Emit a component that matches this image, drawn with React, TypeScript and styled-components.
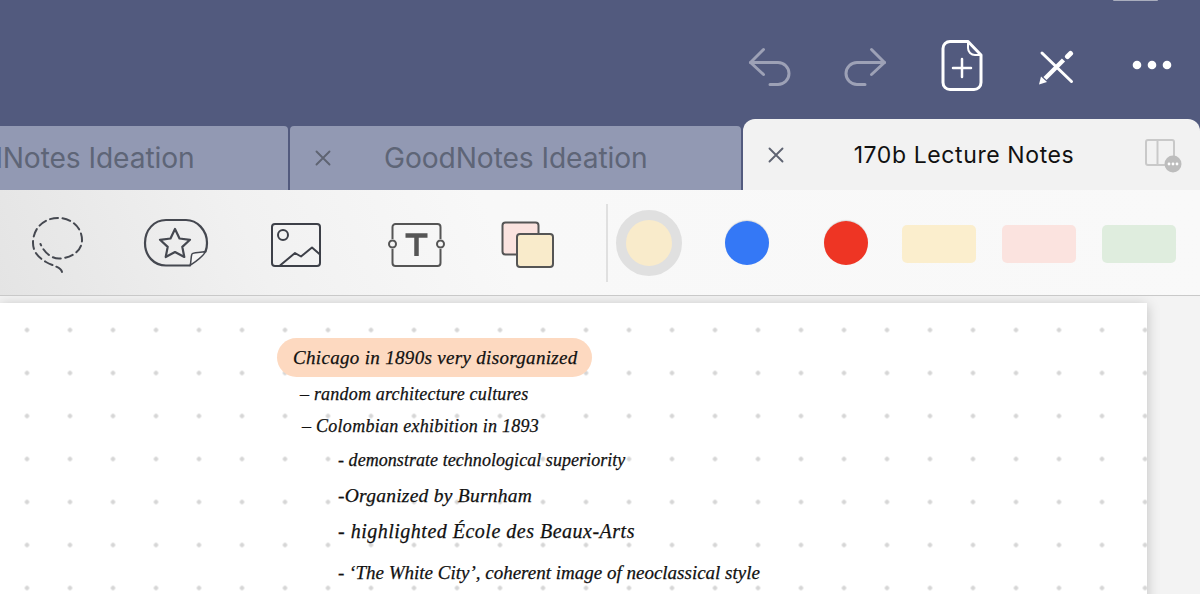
import React from "react";
import styled, { createGlobalStyle } from "styled-components";

const Global = createGlobalStyle`
  html, body { margin: 0; padding: 0; height: 100%; overflow: hidden; background: #f3f3f3; }
  #root { height: 100%; }
`;

const Shell = styled.div`
  width: 1200px; height: 594px; display: flex; flex-direction: column; overflow: hidden;
  font-family: Inter, "Liberation Sans", sans-serif;
`;
const TopBar = styled.header`
  height: 126px; flex: none; background: #525a7e; display: flex; flex-direction: column;
`;
const Handle = styled.div`
  width: 45px; height: 1px; align-self: flex-end; margin-right: 42px; background: #a9adbd; border-radius: 0 0 2px 2px;
`;
const Actions = styled.div`
  display: flex; align-items: flex-start; padding-left: 748px; padding-top: 39px;
`;
const ActionSlot = styled.span<{ $w: number; $top: number }>`
  display: block; flex: none; width: ${(p) => p.$w}px; padding-top: ${(p) => p.$top}px; line-height: 0;
`;
const TabBar = styled.nav`
  height: 64px; flex: none; background: #525a7e; display: flex; gap: 2px;
`;
const Tab = styled.div<{ $shift?: number }>`
  flex: none; width: 451px; height: 64px; margin-left: ${(p) => p.$shift ?? 0}px; background: #9299b3;
  border-radius: 4px 4px 0 0; display: flex; align-items: center; padding-left: 25px; box-sizing: border-box;
  color: #5e6577; font-size: 28.2px; letter-spacing: -0.1px;
`;
const TabLabel = styled.span`
  margin-left: 53px; margin-top: -1px; white-space: nowrap;
`;
const ActiveTab = styled.div`
  flex: 1; margin-top: -7px; height: 71px; background: #f2f2f2; border-radius: 12px 12px 0 0;
  display: flex; align-items: center; padding: 0 18px 0 25px; color: #111; font-size: 23px; letter-spacing: 0.6px;
`;
const ActiveLabel = styled.span`
  flex: 1; text-align: center; white-space: nowrap; padding-left: 2px;
`;
const Toolbar = styled.div`
  height: 106px; flex: none; box-sizing: border-box; border-bottom: 1.5px solid #c9c9c9; display: flex; align-items: center;
  background: linear-gradient(68deg, #e4e4e4 0%, #f1f1f1 22%, #f8f8f8 42%, #f9f9f9 100%);
  padding-top: 1px;
`;
const Tool = styled.div<{ $w: number; $ml?: number; $dy?: number }>`
  flex: none; width: ${(p) => p.$w}px; margin-left: ${(p) => p.$ml ?? 0}px; padding-top: ${(p) => (p.$dy ?? 0) * 2}px;
  display: flex; justify-content: center; align-items: center; line-height: 0;
`;
const Divider = styled.div`
  flex: none; width: 2px; height: 78px; background: #e0e0e0; margin-left: 28px;
`;
const Selected = styled.div`
  flex: none; width: 46px; height: 46px; margin-left: 8px; border: 10px solid #e0e0e0; border-radius: 50%; background: #f9ebcb;
`;
const Dot = styled.div<{ $c: string; $ml: number }>`
  flex: none; width: 44px; height: 44px; margin-left: ${(p) => p.$ml}px; border-radius: 50%; background: ${(p) => p.$c};
  box-shadow: 0 -1px 1px rgba(0,0,0,.12);
`;
const Highlight = styled.div<{ $c: string; $ml: number }>`
  flex: none; width: 74px; height: 38px; margin-left: ${(p) => p.$ml}px; margin-top: 2px; border-radius: 5px; background: ${(p) => p.$c};
`;
const Canvas = styled.main`
  flex: 1; min-height: 0; background: #f3f3f3; padding-top: 7px; overflow: hidden;
`;
const Page = styled.section`
  width: 1147px; height: 320px; background-color: #fff; box-shadow: 0 2px 12px rgba(0,0,0,.22); box-sizing: border-box;
  padding: 35px 0 0 277px;
  background-image: radial-gradient(circle at center, #d6d6d6 0, #d6d6d6 1.9px, transparent 2.5px);
  background-size: 43px 43px;
  background-position: 5.5px 5.5px;
`;
const Line = styled.div<{ $h: number; $indent: number; $size: number; $ls: number }>`
  height: ${(p) => p.$h}px; line-height: ${(p) => p.$h}px; padding-left: ${(p) => p.$indent}px;
  font-family: "Liberation Serif", serif; font-style: italic; color: #111; white-space: nowrap;
  -webkit-text-stroke: 0.25px #111;
  font-size: ${(p) => p.$size}px; letter-spacing: ${(p) => p.$ls}px;
`;
const Title = styled.div`
  width: 315px; height: 39px; line-height: 39px; padding-left: 16px; box-sizing: border-box; border-radius: 20px; background: #fdd9c0;
  font-family: "Liberation Serif", serif; font-style: italic; color: #111; white-space: nowrap; font-size: 19px; letter-spacing: 0.32px;
  -webkit-text-stroke: 0.25px #111;
`;

const UndoIcon = ({ flip }: { flip?: boolean }) => (
  <svg width="43" height="42" viewBox="0 0 43 42" fill="none" stroke="#9da1b6" strokeWidth="3" strokeLinecap="round" strokeLinejoin="round"
    transform={flip ? "scale(-1 1)" : undefined}>
    <path d="M15.500 2.500 2.500 15.500 15.500 27.500" />
    <path d="M2.500 15.500H30A10 10 0 0 1 30 37.500H22" />
  </svg>
);
const DocIcon = () => (
  <svg width="42" height="51" viewBox="0 0 42 51" fill="none" stroke="#fff" strokeWidth="3" strokeLinecap="round" strokeLinejoin="round">
    <path d="M27 1.500H9A7 7 0 0 0 2 8.500V42.500A7 7 0 0 0 9 49.500H33A7 7 0 0 0 40 42.500V15Z" />
    <path d="M27 1.500V8A7 7 0 0 0 34 15H40" strokeWidth="2" />
    <path d="M21 19V37M12 28H30" strokeWidth="2.500" />
  </svg>
);
const PenIcon = () => (
  <svg width="36" height="36" viewBox="0 0 36 36" fill="none" strokeLinecap="round">
    <path d="M4 3 33.500 31.500" stroke="#fff" strokeWidth="3" />
    <path d="M1 34.500 3 26.500 9 32Z" fill="#fff" />
    <path d="M7 28.500 25.500 10" stroke="#fff" strokeWidth="4.500" strokeLinecap="butt" />
    <path d="M29.500 6.500 32.500 3.500" stroke="#fff" strokeWidth="5" />
  </svg>
);
const XIcon = ({ s }: { s: number }) => (
  <svg width={s} height={s} viewBox="0 0 16 16" fill="none" stroke="#5f6472" strokeWidth="1.900" strokeLinecap="round">
    <path d="M1.500 1.500 14.500 14.500M14.500 1.500 1.500 14.500" />
  </svg>
);
const PanelIcon = () => (
  <svg width="40" height="36" viewBox="0 0 40 36">
    <path d="M6 3H30A2 2 0 0 1 32 5V26M15.500 3V28M23 28H6A2 2 0 0 1 4 26V5A2 2 0 0 1 6 3" fill="none" stroke="#c9c9c9" strokeWidth="2" />
    <circle cx="31" cy="27" r="8.500" fill="#bdbdbd" />
    <circle cx="27" cy="27" r="1.400" fill="#fff" /><circle cx="31" cy="27" r="1.400" fill="#fff" /><circle cx="35" cy="27" r="1.400" fill="#fff" />
  </svg>
);
const LassoIcon = () => (
  <svg width="56" height="60" viewBox="0 0 56 60" fill="none" stroke="#454850" strokeWidth="2" strokeLinecap="round">
    <path d="M34 58C33 53 25 52 18 48C11 44 5 38 5 29C5 14 16 4 30 4C44 4 54 14 54 26C54 37 43 44.500 31 44.500C23 44.500 16 38 12.500 30" strokeDasharray="8 4.500" />
  </svg>
);
const StickerIcon = () => (
  <svg width="66" height="50" viewBox="0 0 66 50" fill="none" stroke="#454850" strokeWidth="2.200" strokeLinejoin="round" strokeLinecap="round">
    <path d="M47 47.500H23C11 47.500 2 38 2 25C2 12 11 2 23 2H43C54 2 64 12 64 25C64 28 63.500 31 62.500 33.500" />
    <path d="M47 47.500C52 44 60 39 62.500 33.500C57 35 50 34 49 36C47.500 39 48.500 44 47 47.500Z" fill="#f6f6f6" strokeWidth="1.500" />
    <path d="M32 11 36.500 20.500 47 21.800 39.300 28.900 41.300 39 32 34 22.700 39 24.700 28.900 17 21.800 27.500 20.500Z" />
  </svg>
);
const ImageIcon = () => (
  <svg width="52" height="46" viewBox="0 0 52 46" fill="none" stroke="#3d4048" strokeWidth="2" strokeLinejoin="round">
    <rect x="2" y="2" width="48" height="42" rx="3" />
    <circle cx="13" cy="13" r="5" />
    <path d="M10 43.500 25 31 31 34.500 42 25.500 50 32.500" />
  </svg>
);
const TextBoxIcon = () => (
  <svg width="57" height="46" viewBox="0 0 57 46" fill="none" stroke="#555" strokeWidth="2">
    <path d="M4.500 17V5A3 3 0 0 1 7.500 2H49.500A3 3 0 0 1 52.500 5V17M52.500 27V41A3 3 0 0 1 49.500 44H7.500A3 3 0 0 1 4.500 41V27" />
    <circle cx="4.500" cy="22" r="3.500" />
    <circle cx="52.500" cy="22" r="3.500" />
    <path d="M17.500 13.500H39.500M28.500 13.500V34" strokeWidth="4.500" />
  </svg>
);
const ShapesIcon = () => (
  <svg width="53" height="48" viewBox="0 0 53 48" stroke="#555" strokeWidth="2">
    <rect x="1.500" y="1.500" width="36" height="32" rx="3" fill="#fbe3df" />
    <rect x="16" y="13" width="36" height="33" rx="3" fill="#f9ebcb" />
  </svg>
);

const notes = [
  { text: "– random architecture cultures", h: 34, indent: 23, size: 18, ls: 0.2 },
  { text: "– Colombian exhibition in 1893", h: 31, indent: 25, size: 18, ls: 0.27 },
  { text: "- demonstrate technological superiority", h: 36, indent: 61, size: 18, ls: 0.05 },
  { text: "-Organized by Burnham", h: 36, indent: 61, size: 19.5, ls: 0.25 },
  { text: "- highlighted École des Beaux-Arts", h: 34, indent: 61, size: 20, ls: 0.5 },
  { text: "- ‘The White City’, coherent image of neoclassical style", h: 50, indent: 61, size: 19, ls: 0 },
];

export default function App() {
  return (
    <Shell>
      <Global />
      <TopBar>
        <Handle />
        <Actions>
          <ActionSlot $w={96} $top={7}><UndoIcon /></ActionSlot>
          <ActionSlot $w={97} $top={7}><UndoIcon flip /></ActionSlot>
          <ActionSlot $w={97} $top={0}><DocIcon /></ActionSlot>
          <ActionSlot $w={93} $top={10}><PenIcon /></ActionSlot>
          <ActionSlot $w={42} $top={18}>
            <svg width="42" height="14" viewBox="0 0 42 14" fill="#fff">
              <circle cx="6" cy="7" r="4.300" /><circle cx="21" cy="7" r="4.300" /><circle cx="36" cy="7" r="4.300" />
            </svg>
          </ActionSlot>
        </Actions>
      </TopBar>
      <TabBar>
        <Tab $shift={-163}><XIcon s={16} /><TabLabel>GoodNotes Ideation</TabLabel></Tab>
        <Tab><XIcon s={16} /><TabLabel>GoodNotes Ideation</TabLabel></Tab>
        <ActiveTab>
          <XIcon s={16} />
          <ActiveLabel>170b Lecture Notes</ActiveLabel>
          <PanelIcon />
        </ActiveTab>
      </TabBar>
      <Toolbar>
        <Tool $w={120} $ml={-4} $dy={1}><LassoIcon /></Tool>
        <Tool $w={120}><StickerIcon /></Tool>
        <Tool $w={120} $dy={2}><ImageIcon /></Tool>
        <Tool $w={120} $dy={2}><TextBoxIcon /></Tool>
        <Tool $w={102} $dy={2}><ShapesIcon /></Tool>
        <Divider />
        <Selected />
        <Dot $c="#3478f6" $ml={43} />
        <Dot $c="#ee3524" $ml={55} />
        <Highlight $c="#fbeecd" $ml={34} />
        <Highlight $c="#fbe3df" $ml={26} />
        <Highlight $c="#dfedde" $ml={26} />
      </Toolbar>
      <Canvas>
        <Page>
          <Title>Chicago in 1890s very disorganized</Title>
          {notes.map((n) => (
            <Line key={n.text} $h={n.h} $indent={n.indent} $size={n.size} $ls={n.ls}>{n.text}</Line>
          ))}
        </Page>
      </Canvas>
    </Shell>
  );
}
